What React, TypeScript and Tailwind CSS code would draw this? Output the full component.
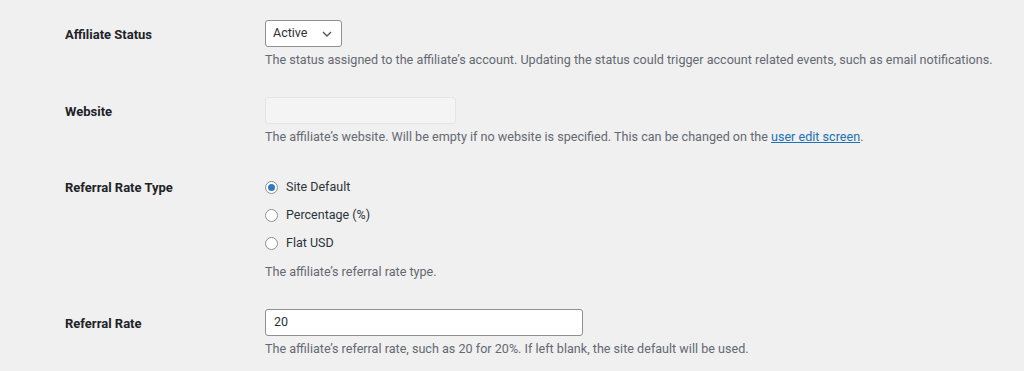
const font = { fontFamily: "Roboto, 'Liberation Sans', sans-serif" };

function Label({ children }: { children: React.ReactNode }) {
  return (
    <div className="w-[200px] shrink-0 pt-px text-[13px] font-bold leading-[27px] text-[#1d2327]">
      {children}
    </div>
  );
}

function Desc({ children, className = "" }: { children: React.ReactNode; className?: string }) {
  return <p className={`text-[12.6px] leading-[18px] text-[#646970] ${className}`}>{children}</p>;
}

function Radio({ label, checked }: { label: string; checked?: boolean }) {
  return (
    <label className="flex h-[28px] items-center gap-[8px] text-[12.5px] text-[#2c3338]">
      <span className="flex h-[13px] w-[13px] items-center justify-center rounded-full border border-[#8c8f94] bg-white">
        {checked && <span className="h-[7px] w-[7px] rounded-full bg-[#2f7cc1]" />}
      </span>
      {label}
    </label>
  );
}

export default function App() {
  return (
    <div className="h-[371px] w-[1024px] overflow-hidden bg-[#f0f0f1] pl-[65px] pt-[20px]" style={font}>
      <div className="flex">
        <Label>Affiliate Status</Label>
        <div>
          <div className="flex h-[27px] w-[77px] items-center justify-between rounded-[3px] border border-[#8c8f94] bg-white pl-[7px] pr-[9px] text-[12.5px] text-[#2c3338]">
            <span>Active</span>
            <svg width="10" height="6" viewBox="0 0 10 6" fill="none">
              <path d="M1 1l4 4 4-4" stroke="#50575e" strokeWidth="1.4" />
            </svg>
          </div>
          <Desc className="mt-[4px]">
            The status assigned to the affiliate’s account. Updating the status could trigger account related events, such as email notifications.
          </Desc>
        </div>
      </div>

      <div className="mt-[28px] flex">
        <Label>Website</Label>
        <div>
          <div className="h-[27px] w-[191px] rounded-[3px] border border-[#e4e4e6] bg-[#f4f4f5]" />
          <Desc className="mt-[4px]">
            The affiliate’s website. Will be empty if no website is specified. This can be changed on the{" "}
            <a href="#" className="text-[#2271b1] underline">user edit screen</a>.
          </Desc>
        </div>
      </div>

      <div className="mt-[27px] flex">
        <Label>Referral Rate Type</Label>
        <div>
          <Radio label="Site Default" checked />
          <Radio label="Percentage (%)" />
          <Radio label="Flat USD" />
          <Desc className="mt-[6px]">The affiliate’s referral rate type.</Desc>
        </div>
      </div>

      <div className="mt-[28px] flex">
        <Label>Referral Rate</Label>
        <div>
          <div className="flex h-[27px] w-[318px] items-center rounded-[3px] border border-[#8c8f94] bg-white pl-[8px] text-[12.5px] text-[#2c3338]">
            20
          </div>
          <Desc className="mt-[4px]">
            The affiliate’s referral rate, such as 20 for 20%. If left blank, the site default will be used.
          </Desc>
        </div>
      </div>
    </div>
  );
}
